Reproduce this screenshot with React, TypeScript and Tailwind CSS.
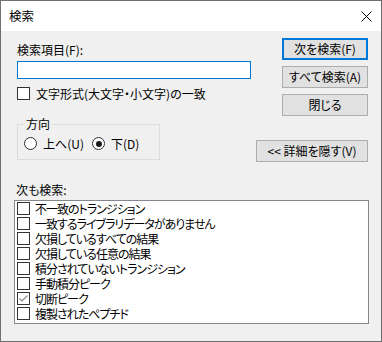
import React from "react";

const items: { label: string; checked?: boolean }[] = [
  { label: "不一致のトランジション" },
  { label: "一致するライブラリデータがありません" },
  { label: "欠損しているすべての結果" },
  { label: "欠損している任意の結果" },
  { label: "積分されていないトランジション" },
  { label: "手動積分ピーク" },
  { label: "切断ピーク", checked: true },
  { label: "複製されたペプチド" },
];

function Check({ checked }: { checked?: boolean }) {
  return (
    <div className="w-[13px] h-[13px] border border-[#333333] bg-white flex items-center justify-center shrink-0">
      {checked && (
        <svg width="11" height="11" viewBox="0 0 11 11">
          <polyline points="1.5,5.5 4,8 9.5,2.5" fill="none" stroke="#8a8a8a" strokeWidth="1.2" />
        </svg>
      )}
    </div>
  );
}

function Radio({ selected }: { selected?: boolean }) {
  return (
    <div className="w-[13px] h-[13px] rounded-full border border-[#333333] bg-white flex items-center justify-center shrink-0">
      {selected && <div className="w-[6px] h-[6px] rounded-full bg-[#1a1a1a]" />}
    </div>
  );
}

export default function App() {
  return (
    <div className="w-[382px] h-[342px] border border-[#707070] bg-[#f0f0f0] flex flex-col font-['Noto_Sans_CJK_JP',sans-serif] text-[12px] text-black leading-[14px] [font-feature-settings:'palt']">
      <div className="h-[30px] bg-white flex items-center justify-between pl-[8px] pr-[9px] shrink-0">
        <span className="text-[12.5px]">検索</span>
        <svg width="11" height="11" viewBox="0 0 11 11">
          <path d="M0.5 0.5 L10.5 10.5 M10.5 0.5 L0.5 10.5" stroke="#000" strokeWidth="1" />
        </svg>
      </div>

      <div className="flex h-[152px] pl-[16px] pt-[7px] pr-[13px] shrink-0">
        <div className="flex flex-col w-[234px] mt-[5px]">
          <div className="h-[14px]">検索項目(F):</div>
          <div className="mt-[4px] h-[18px] w-[234px] border border-[#0078d7] bg-white" />
          <div className="mt-[8px] h-[13px] flex items-center">
            <Check />
            <span className="ml-[6px] h-[13px] leading-[13px]">文字形式(大文字・小文字)の一致</span>
          </div>
          <fieldset className="mt-[17px] w-[143px] border border-[#dcdcdc] pl-[6px] pt-[6px] pb-[9px]">
            <legend className="px-[2px] h-[14px]">方向</legend>
            <div className="flex items-center h-[13px]">
              <div className="flex items-center w-[68px]">
                <Radio />
                <span className="ml-[6px] h-[13px] leading-[13px]">上へ(U)</span>
              </div>
              <div className="flex items-center">
                <Radio selected />
                <span className="ml-[6px] h-[13px] leading-[13px]">下(D)</span>
              </div>
            </div>
          </fieldset>
        </div>

        <div className="ml-auto flex flex-col items-end">
          <div className="w-[86px] h-[22px] border-2 border-[#0078d7] bg-[#e1e1e1] flex items-center justify-center">
            次を検索(F)
          </div>
          <div className="mt-[6px] w-[86px] h-[22px] border border-[#adadad] bg-[#e1e1e1] flex items-center justify-center">
            すべて検索(A)
          </div>
          <div className="mt-[6px] w-[86px] h-[22px] border border-[#adadad] bg-[#e1e1e1] flex items-center justify-center">
            閉じる
          </div>
          <div className="mt-[24px] w-[112px] h-[22px] border border-[#adadad] bg-[#e1e1e1] flex items-center justify-center">
            &lt;&lt; 詳細を隠す(V)
          </div>
        </div>
      </div>

      <div className="pl-[15px] h-[14px]">次も検索:</div>
      <div className="mt-[3px] ml-[13px] w-[355px] h-[124px] border border-[#828790] bg-white flex flex-col">
        {items.map((it) => (
          <div key={it.label} className="h-[15px] flex items-center pl-[2px]">
            <Check checked={it.checked} />
            <span className="ml-[5px] h-[14px] leading-[14px] tracking-[-1px]">{it.label}</span>
          </div>
        ))}
      </div>
    </div>
  );
}
